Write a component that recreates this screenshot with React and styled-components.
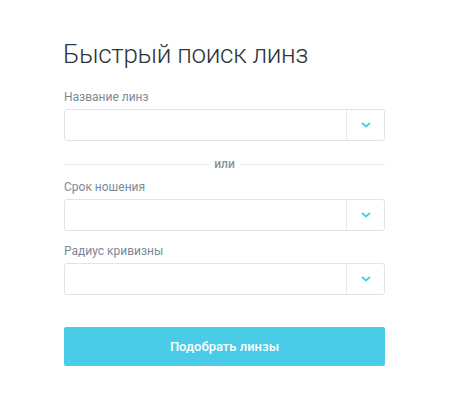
import React from "react";
import styled, { createGlobalStyle } from "styled-components";

const GlobalStyle = createGlobalStyle`
  body {
    margin: 0;
    background: #fff;
    font-family: Roboto, "Liberation Sans", Arial, sans-serif;
  }
`;

const Page = styled.div`
  width: 450px;
  height: 411px;
  padding: 39px 65px 0 64px;
  box-sizing: border-box;
`;

const Title = styled.h1`
  margin: 0 0 0 -1px;
  font-size: 26px;
  line-height: 30px;
  font-weight: 300;
  letter-spacing: -0.3px;
  color: #2f3539;
`;

const Form = styled.form`
  display: flex;
  flex-direction: column;
  margin-top: 21px;
`;

const Field = styled.div`
  display: flex;
  flex-direction: column;
  margin-top: ${props => props.gap || 0}px;
`;

const Label = styled.label`
  font-size: 12px;
  line-height: 14px;
  color: #7b8a98;
  margin-bottom: 5px;
`;

const Select = styled.div`
  display: flex;
  height: 32px;
  box-sizing: border-box;
  border: 1px solid #dde5e9;
  border-radius: 3px;
  background: #fff;
`;

const SelectValue = styled.div`
  flex: 1;
`;

const SelectToggle = styled.div`
  width: 37px;
  border-left: 1px solid #e3e9ec;
  display: flex;
  align-items: center;
  justify-content: center;
`;

const Divider = styled.div`
  display: flex;
  align-items: center;
  gap: 5px;
  margin: 16px 0 9px;
  height: 14px;
  font-size: 12px;
  font-weight: 500;
  color: #8593a0;

  &::before,
  &::after {
    content: "";
    flex: 1;
    height: 1px;
    background: #e9eef1;
  }
`;

const Button = styled.button`
  margin-top: 32px;
  height: 39px;
  border: none;
  border-radius: 2px;
  background: #4acbe8;
  color: #fff;
  font-family: inherit;
  font-size: 13px;
  font-weight: 500;
  cursor: pointer;
`;

const Chevron = () => (
  <svg width="10" height="6" viewBox="0 0 10 6">
    <path d="M1 1l4 3.5L9 1" fill="none" stroke="#4acbe8" strokeWidth="1.8" />
  </svg>
);

const Dropdown = ({ label, gap }) => (
  <Field gap={gap}>
    <Label>{label}</Label>
    <Select>
      <SelectValue />
      <SelectToggle>
        <Chevron />
      </SelectToggle>
    </Select>
  </Field>
);

const App = () => (
  <Page>
    <GlobalStyle />
    <Title>Быстрый поиск линз</Title>
    <Form onSubmit={e => e.preventDefault()}>
      <Dropdown label="Название линз" />
      <Divider>или</Divider>
      <Dropdown label="Срок ношения" />
      <Dropdown label="Радиус кривизны" gap={13} />
      <Button type="submit">Подобрать линзы</Button>
    </Form>
  </Page>
);

export default App;
